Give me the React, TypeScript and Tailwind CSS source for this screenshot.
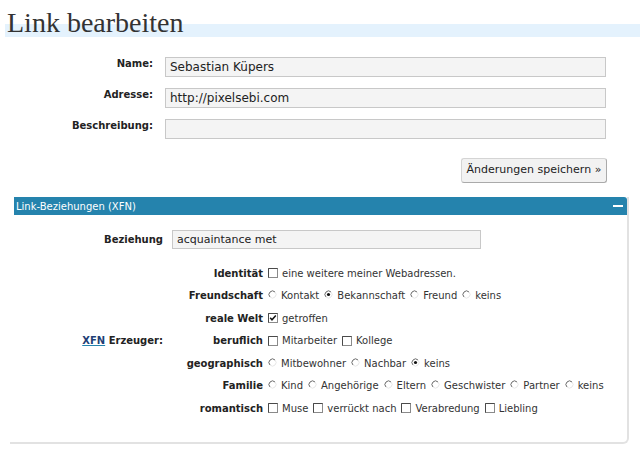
import React from "react";

type Item = { label: string; checked?: boolean };
type Row = { label: string; kind: "cb" | "radio"; items: Item[] };

const rows: Row[] = [
  { label: "Identität", kind: "cb", items: [{ label: "eine weitere meiner Webadressen." }] },
  {
    label: "Freundschaft",
    kind: "radio",
    items: [{ label: "Kontakt" }, { label: "Bekannschaft", checked: true }, { label: "Freund" }, { label: "keins" }],
  },
  { label: "reale Welt", kind: "cb", items: [{ label: "getroffen", checked: true }] },
  { label: "beruflich", kind: "cb", items: [{ label: "Mitarbeiter" }, { label: "Kollege" }] },
  {
    label: "geographisch",
    kind: "radio",
    items: [{ label: "Mitbewohner" }, { label: "Nachbar" }, { label: "keins", checked: true }],
  },
  {
    label: "Familie",
    kind: "radio",
    items: [
      { label: "Kind" },
      { label: "Angehörige" },
      { label: "Eltern" },
      { label: "Geschwister" },
      { label: "Partner" },
      { label: "keins" },
    ],
  },
  {
    label: "romantisch",
    kind: "cb",
    items: [{ label: "Muse" }, { label: "verrückt nach" }, { label: "Verabredung" }, { label: "Liebling" }],
  },
];

function Checkbox({ checked }: { checked?: boolean }) {
  return (
    <svg width="10" height="10" viewBox="0 0 10 10" className="shrink-0">
      <rect x="0.5" y="0.5" width="9" height="9" fill="#fff" stroke="#8a8a8a" />
      <path d="M0.5 9.5V0.5H9.5" fill="none" stroke="#4a4a4a" />
      {checked && <path d="M2.2 4.8L4 6.8L7.8 2.6" fill="none" stroke="#111" strokeWidth="1.5" />}
    </svg>
  );
}

// old-style radio: dark arc top-left, faint arc bottom-right
function Radio({ checked }: { checked?: boolean }) {
  return (
    <svg width="9" height="9" viewBox="0 0 9 9" className="shrink-0 -mt-[2px]">
      <circle cx="4.5" cy="4.5" r="3.5" fill="#fff" />
      <path d="M2 7A3.5 3.5 0 0 1 7 2" fill="none" stroke="#6a6a6a" strokeWidth="1" />
      <path d="M7 2A3.5 3.5 0 0 1 2 7" fill="none" stroke="#e6e6e6" strokeWidth="1" />
      {checked && <circle cx="4.5" cy="4.5" r="1.6" fill="#111" />}
    </svg>
  );
}

function FormRow({ label, value }: { label: string; value: string }) {
  return (
    <div className="flex items-start">
      <div className="w-[153px] text-right font-bold text-[10px] leading-[14px] text-[#222]">{label}</div>
      <div className="ml-[12px] w-[441px] h-[20px] border border-[#c8c8c8] bg-[#f4f4f4] px-[4px] text-[12px] leading-[18px] text-[#222]">
        {value}
      </div>
    </div>
  );
}

export default function App() {
  return (
    <div className="w-[640px] h-[450px] bg-white font-['DejaVu_Sans',sans-serif] text-[#333]">
      <h2 className="ml-[5px] h-[37px] pt-[9px] pl-[2px] bg-[linear-gradient(to_bottom,transparent_24px,#e4f2fd_24px)] font-['Liberation_Serif',serif] text-[28px] leading-[28px] text-[#333]">
        Link bearbeiten
      </h2>

      <div className="mt-[20px] flex flex-col gap-[11px]">
        <FormRow label="Name:" value="Sebastian Küpers" />
        <FormRow label="Adresse:" value="http://pixelsebi.com" />
        <FormRow label="Beschreibung:" value="" />
      </div>

      <div className="mt-[19px] flex justify-end pr-[33px]">
        <button className="h-[25px] w-[146px] rounded-[3px] border border-[#d4d4d4] border-b-[#aaa] border-r-[#aaa] bg-[#f2f2f2] text-[11px] text-[#222]">
          Änderungen speichern »
        </button>
      </div>

      <div className="mt-[14px] ml-[10px] w-[619px] border-r-2 border-b-2 border-[#e2e2e2] rounded-br-[6px] pb-[22px]">
        <div className="ml-[4px] h-[18px] rounded-tr-[3px] bg-[#2583ad] flex items-center justify-between pl-[2px] pr-[4px]">
          <span className="text-[10px] text-white">Link-Beziehungen (XFN)</span>
          <span className="w-[10px] h-[2px] bg-white" />
        </div>

        <div className="pl-[4px] pt-[15px]">
          <div className="flex items-center">
            <div className="w-[149px] text-right font-bold text-[10px] text-[#222]">Beziehung</div>
            <div className="ml-[9px] w-[309px] h-[19px] border border-[#c8c8c8] bg-[#f4f4f4] px-[4px] text-[11px] leading-[17px] text-[#222]">
              acquaintance met
            </div>
          </div>

          <div className="mt-[13px] flex items-center">
            <div className="w-[149px] text-right font-bold text-[10px] text-[#222]">
              <a className="text-[#1f3f76] underline decoration-[#2583ad]">XFN</a> Erzeuger:
            </div>
            <div className="ml-[9px] flex flex-col">
              {rows.map((row) => (
                <div key={row.label} className="flex items-center h-[22.5px]">
                  <div className="w-[91px] text-right font-bold text-[10px] text-[#222]">{row.label}</div>
                  <div className="ml-[5px] flex items-center gap-[5px] text-[10px] text-[#333]">
                    {row.items.map((item) => (
                      <label key={item.label} className="flex items-center gap-[4px]">
                        {row.kind === "cb" ? <Checkbox checked={item.checked} /> : <Radio checked={item.checked} />}
                        <span>{item.label}</span>
                      </label>
                    ))}
                  </div>
                </div>
              ))}
            </div>
          </div>
        </div>
      </div>
    </div>
  );
}
